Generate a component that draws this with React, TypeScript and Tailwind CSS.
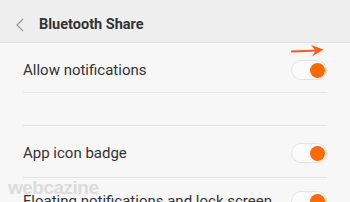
import React from "react";

function Toggle() {
  return (
    <div className="relative w-[36px] h-[20px] rounded-full bg-[#fbfbfb] border border-[#e3e3e3] shrink-0">
      <div className="absolute right-[1px] top-[1.5px] w-[15px] h-[15px] rounded-full bg-[#ff6a00]" />
    </div>
  );
}

function Row({ label, h }: { label: string; h: string }) {
  return (
    <div className={`flex items-center justify-between ${h}`}>
      <span className="text-[15px] text-[#333333] whitespace-nowrap">{label}</span>
      <Toggle />
    </div>
  );
}

export default function App() {
  return (
    <div
      className="relative w-[350px] h-[202px] overflow-hidden bg-[#f7f7f7]"
      style={{ fontFamily: "Roboto, 'Noto Sans', sans-serif" }}
    >
      <div className="h-[43px] pt-[8px] bg-[#eeeeee] flex items-center border-b border-[#e1e1e1]">
        <svg width="8" height="14" viewBox="0 0 8 14" className="ml-[16px]">
          <polyline points="7,1 1,7 7,13" fill="none" stroke="#9a9a9a" strokeWidth="1.2" />
        </svg>
        <span className="ml-[15px] text-[14.5px] font-bold text-[#333333]">Bluetooth Share</span>
      </div>
      <div className="px-[23px]">
        <Row label="Allow notifications" h="h-[49px] pt-[5px]" />
        <div className="h-px bg-[#e3e3e3]" />
        <div className="h-[32px]" />
        <div className="h-px bg-[#e3e3e3]" />
        <Row label="App icon badge" h="h-[51px] pt-[3px]" />
        <div className="h-px bg-[#e3e3e3]" />
        <Row label="Floating notifications and lock screen" h="h-[46px]" />
      </div>
      <svg className="absolute left-[291px] top-[44px]" width="33" height="14" viewBox="0 0 33 14">
        <line x1="1" y1="7.5" x2="26" y2="6.5" stroke="#ff5a1a" strokeWidth="2.2" strokeLinecap="round" />
        <polygon points="20,1 32.5,5.5 21,12.5 24.5,6.8" fill="#ff5a1a" />
      </svg>
      <div
        className="absolute left-[8px] top-[178px] text-[19px] font-bold text-[#dcdcdc] tracking-[-0.5px] leading-none"
        style={{ fontFamily: "'Liberation Sans', Arial, sans-serif" }}
      >
        webcazine
      </div>
    </div>
  );
}
